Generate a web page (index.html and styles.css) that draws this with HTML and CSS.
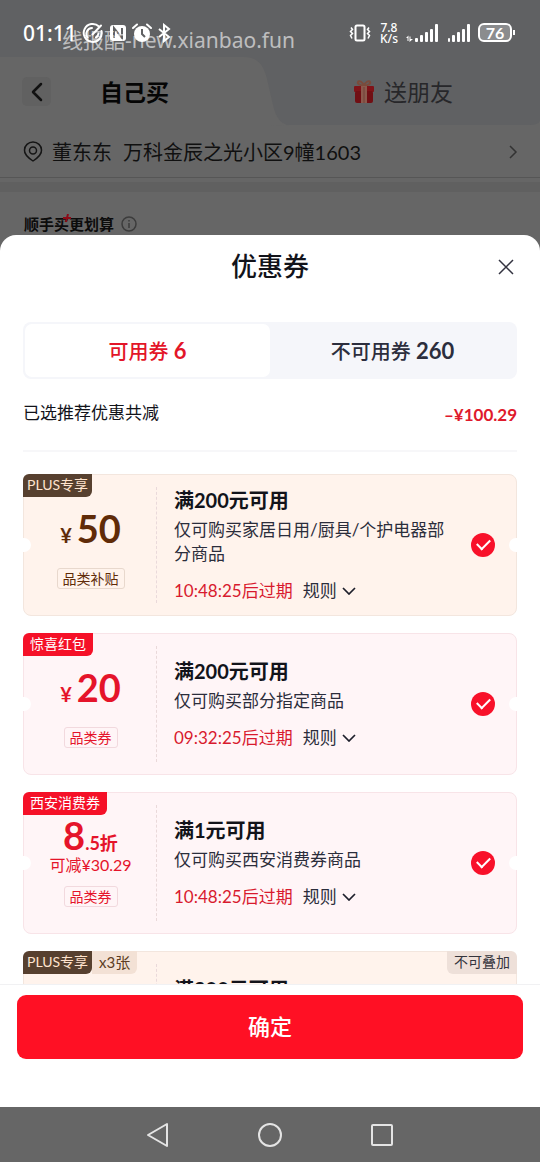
FILE: index.html
```html
<!DOCTYPE html>
<html lang="zh-CN">
<head>
<meta charset="utf-8">
<meta name="viewport" content="width=device-width, initial-scale=1">
<title>优惠券</title>
<link rel="stylesheet" href="styles.css">
</head>
<body>
<div class="statusbar">
  <div class="status-left">
    <span class="clock">01:11</span>
    <svg width="22" height="22" viewBox="0 0 22 22" fill="none" stroke="#fff" stroke-width="2" stroke-linecap="round"><path d="M17 4.500A9 9 0 1 0 19.500 9M5.500 15.500A6 6 0 0 1 10 6M10.500 12.500L19 3.500M14 15.500q2-1 2.500-4"/></svg>
    <svg width="18" height="18" viewBox="0 0 18 18"><rect x="1" y="1" width="16" height="16" rx="3" fill="#fff"/><path d="M5 14V4l8 10V4" fill="none" stroke="#606163" stroke-width="2"/></svg>
    <svg width="20" height="20" viewBox="0 0 20 20"><circle cx="10" cy="11" r="8" fill="#fff"/><path d="M1 5l4-3.500M19 5l-4-3.500" stroke="#fff" stroke-width="2" stroke-linecap="round"/><path d="M10 6v5l3 3" fill="none" stroke="#606163" stroke-width="2"/></svg>
    <svg width="14" height="20" viewBox="0 0 14 20" fill="none" stroke="#fff" stroke-width="2"><path d="M2 6l10 8-5 4V2l5 4-10 8"/></svg>
  </div>
  <div class="status-right">
    <svg width="22" height="18" viewBox="0 0 22 18" fill="none" stroke="#fff" stroke-width="2"><rect x="6.500" y="1.500" width="9" height="15" rx="1.500"/><path d="M2 3.500l1.500 2-2 2 2 2-2 2 1.500 3M20 3.500l-1.500 2 2 2-2 2 2 2-1.500 3" stroke-width="1.500"/></svg>
    <span class="speed"><span>7.8</span><span>K/s</span></span>
    <svg width="32" height="18" viewBox="0 0 32 18" fill="#fff"><path d="M0 14l2.500-2.500V17H1.500v-3zM3.500 12.500h1v2.500H7l-3.500 3z"/><rect x="9" y="14" width="3" height="4" rx="1"/><rect x="14" y="11" width="3" height="7" rx="1"/><rect x="19" y="8" width="3" height="10" rx="1"/><rect x="24" y="5" width="3" height="13" rx="1"/><rect x="29" y="0" width="3" height="18" rx="1"/></svg>
    <svg class="signal" width="22" height="18" viewBox="0 0 22 18" fill="#fff"><rect y="14" width="2" height="4" rx="1"/><rect x="4" y="11" width="3" height="7" rx="1"/><rect x="9" y="8" width="3" height="10" rx="1"/><rect x="14" y="5" width="3" height="13" rx="1"/><rect x="19" y="0" width="3" height="18" rx="1"/></svg>
    <span class="battery">76</span>
  </div>
  <span class="watermark">线报酷-new.xianbao.fun</span>
</div>

<header class="tabs">
  <svg class="tabs-shape" viewBox="0 0 540 69" preserveAspectRatio="none"><path fill="#666" d="M0 0H244C258 0 264 9 267 22L273 48C276 61 281 69 294 69H0Z"/><path fill="#666" d="M270 69H540V64Q538 68 530 68H290Z"/></svg>
  <div class="tab tab-self">
    <button class="back" aria-label="返回"><svg width="16" height="20" viewBox="0 0 16 20" fill="none" stroke="#111" stroke-width="2.500" stroke-linecap="round" stroke-linejoin="round"><path d="M12 2L4 10l8 8"/></svg></button>
    <button class="tab-label active">自己买</button>
  </div>
  <div class="tab tab-gift">
    <button class="tab-label"><svg width="22" height="24" viewBox="0 0 22 24"><path d="M11 6C7 5 4 4 5 2s5 0 6 4c1-4 5-6 6-4s-2 3-6 4" fill="none" stroke="#7b4b3b" stroke-width="2"/><rect x="1" y="6" width="20" height="6" rx="1" fill="#801318"/><rect x="2" y="11" width="18" height="12" rx="2" fill="#710f14"/><path d="M8 6h6v17H8z" fill="#8b5a4d"/><path d="M11 7v16" stroke="#704039" stroke-width="1"/></svg>送朋友</button>
  </div>
</header>

<a class="address" href="#">
  <svg width="20" height="22" viewBox="0 0 20 22" fill="none" stroke="#151515" stroke-width="1.500"><path d="M10 20Q1 14 1.500 9a8.500 8 0 0 1 17 0Q19 14 10 20Z" stroke-linejoin="round"/><circle cx="10" cy="9.500" r="3.500"/></svg>
  <span class="who">董东东</span>
  <span class="where">万科金辰之光小区9幢1603</span>
  <svg width="10" height="14" viewBox="0 0 10 14" fill="none" stroke="#333" stroke-width="1.500"><path d="M2 1l6 6-6 6"/></svg>
</a>
<div class="band"></div>
<div class="addon">
  <span>顺手买<svg class="plus" width="8" height="8" viewBox="0 0 8 8" stroke="#8c0a17" stroke-width="2"><path d="M5 0L3 8M0 4h8"/></svg>更划算</span>
  <svg width="16" height="16" viewBox="0 0 16 16" fill="none" stroke="#3c3c3c" stroke-width="1.500"><circle cx="8" cy="8" r="7"/><path d="M8 7v5M8 4v1.500"/></svg>
</div>

<main class="sheet">
  <div class="sheet-head">
    <h1>优惠券</h1>
    <button class="close" aria-label="关闭"><svg width="16" height="16" viewBox="0 0 16 16" stroke="#333340" stroke-width="1.500"><path d="M1 1l14 14M15 1L1 15"/></svg></button>
  </div>
  <div class="segment">
    <button class="seg active">可用券 <b>6</b></button>
    <button class="seg">不可用券 <b>260</b></button>
  </div>
  <div class="summary"><span>已选推荐优惠共减</span><strong>–¥100.29</strong></div>

  <div class="list">
    <article class="coupon plus-card">
      <span class="badge">PLUS专享</span>
      <div class="value">
        <div class="amount"><p class="price"><small>¥</small>50</p></div>
        <span class="chip">品类补贴</span>
      </div>
      <div class="info">
        <h2>满200元可用</h2>
        <p class="desc">仅可购买家居日用/厨具/个护电器部分商品</p>
        <p class="expiry"><time>10:48:25后过期</time><button class="rule">规则<svg width="14" height="8" viewBox="0 0 14 8" fill="none" stroke="#1d1f2b" stroke-width="1.700"><path d="M1 1l6 6 6-6"/></svg></button></p>
      </div>
      <input class="check" type="checkbox" checked aria-label="选择满200元可用品类补贴">
    </article>

    <article class="coupon">
      <span class="badge">惊喜红包</span>
      <div class="value">
        <div class="amount"><p class="price"><small>¥</small>20</p></div>
        <span class="chip">品类券</span>
      </div>
      <div class="info">
        <h2>满200元可用</h2>
        <p class="desc">仅可购买部分指定商品</p>
        <p class="expiry"><time>09:32:25后过期</time><button class="rule">规则<svg width="14" height="8" viewBox="0 0 14 8" fill="none" stroke="#1d1f2b" stroke-width="1.700"><path d="M1 1l6 6 6-6"/></svg></button></p>
      </div>
      <input class="check" type="checkbox" checked aria-label="选择满200元可用品类券">
    </article>

    <article class="coupon">
      <span class="badge">西安消费券</span>
      <div class="value">
        <div class="amount"><p class="price discount">8<small>.5折</small></p><p class="saving">可减¥30.29</p></div>
        <span class="chip">品类券</span>
      </div>
      <div class="info">
        <h2>满1元可用</h2>
        <p class="desc">仅可购买西安消费券商品</p>
        <p class="expiry"><time>10:48:25后过期</time><button class="rule">规则<svg width="14" height="8" viewBox="0 0 14 8" fill="none" stroke="#1d1f2b" stroke-width="1.700"><path d="M1 1l6 6 6-6"/></svg></button></p>
      </div>
      <input class="check" type="checkbox" checked aria-label="选择满1元可用品类券">
    </article>

    <article class="coupon plus-card brief">
      <span class="badge">PLUS专享</span>
      <span class="count">x3张</span>
      <span class="exclusive">不可叠加</span>
      <div class="value"></div>
      <div class="info"><h2>满200元可用</h2></div>
    </article>
  </div>

  <footer class="sheet-foot"><button class="confirm">确定</button></footer>
</main>

<nav class="navbar">
  <button aria-label="后退"><svg width="24" height="26" viewBox="0 0 24 26" fill="none" stroke="#e4e4e4" stroke-width="2" stroke-linejoin="round"><path d="M21 2v22L2 13Z"/></svg></button>
  <button aria-label="主屏幕"><svg width="26" height="26" viewBox="0 0 26 26" fill="none" stroke="#e4e4e4" stroke-width="2"><circle cx="13" cy="13" r="11"/></svg></button>
  <button aria-label="最近任务"><svg width="24" height="24" viewBox="0 0 24 24" fill="none" stroke="#e4e4e4" stroke-width="2"><rect x="2" y="2" width="20" height="20" rx="1"/></svg></button>
</nav>
</body>
</html>
```
FILE: styles.css
```css
* { box-sizing: border-box; }
body {
  margin: 0;
  height: 100vh;
  display: flex;
  flex-direction: column;
  background: #666;
  color: #12131a;
  font-family: Lato, "Noto Sans CJK SC", sans-serif;
  font-size: 17px;
  line-height: 24px;
}
h1, h2, p { margin: 0; }
svg { display: block; flex: none; }
button { padding: 0; border: 0; background: none; color: inherit; font: inherit; }

.statusbar {
  position: relative;
  flex: none;
  height: 57px;
  padding: 8px 28px 0 23px;
  display: flex;
  justify-content: space-between;
  align-items: center;
  background: #606163;
  color: #fff;
}
.status-left, .status-right { display: flex; align-items: center; }
.status-left { gap: 5px; }
.clock { font-family: "Noto Sans", sans-serif; font-size: 21px; font-weight: 500; }
.speed {
  display: flex;
  flex-direction: column;
  margin: 0 8px 0 9px;
  font-size: 12px;
  line-height: 11px;
  font-family: "Noto Sans", sans-serif;
  font-weight: 500;
  text-align: center;
}
.signal { margin: 0 8px 0 10px; }
.battery {
  position: relative;
  width: 34px;
  border: 2px solid #fff;
  border-radius: 6px;
  background: #8b8c8e;
  font-size: 16px;
  line-height: 15px;
  font-weight: 700;
  text-align: center;
}
.battery::after {
  content: "";
  position: absolute;
  right: -5px;
  top: 5px;
  width: 2px;
  height: 5px;
  background: #fff;
}
.watermark {
  position: absolute;
  left: 62px;
  top: 28px;
  color: rgba(255, 255, 255, 0.6);
  font-family: "Noto Sans", "Noto Sans CJK SC", sans-serif;
  font-size: 21px;
  white-space: nowrap;
}

.tabs {
  position: relative;
  flex: none;
  height: 69px;
  display: flex;
  background: #606163;
}
.tabs-shape { position: absolute; inset: 0; width: 100%; height: 100%; }
.tab { position: relative; flex: 1; display: flex; align-items: center; }
.tab-self { padding-left: 22px; gap: 49px; }
.tab-gift { justify-content: center; }
.back {
  width: 29px;
  height: 29px;
  display: grid;
  place-items: center;
  border-radius: 5px;
  background: #616161;
}
.tab-label {
  display: flex;
  align-items: center;
  gap: 9px;
  color: #27272a;
  font-size: 23px;
}
.tab-label.active { color: #050505; font-weight: 700; }
.tab-gift { padding-right: 10px; }

.address {
  flex: none;
  height: 52px;
  padding: 0 22px 0 23px;
  display: flex;
  align-items: center;
  border-bottom: 1px solid #565656;
  color: #101010;
  font-size: 20px;
  text-decoration: none;
}
.who { margin: 0 11px 0 9px; }
.where { flex: 1; }
.band { flex: none; height: 10px; margin-top: 4px; background: #606060; }
.addon {
  flex: none;
  height: 43px;
  padding: 20px 24px 0;
  display: flex;
  align-items: center;
  gap: 7px;
  color: #0c0c0c;
  font-size: 15px;
  font-weight: 700;
}
.addon span { position: relative; }
.plus { position: absolute; left: 39px; top: 2px; }

.sheet {
  flex: 1;
  min-height: 0;
  display: flex;
  flex-direction: column;
  border-radius: 16px 16px 0 0;
  background: #fff;
}
.sheet-head {
  flex: none;
  position: relative;
  display: grid;
  place-items: center;
  height: 62px;
}
.sheet-head h1 { font-size: 26px; font-weight: 500; line-height: 36px; }
.close { position: absolute; right: 26px; top: 24px; }

.segment {
  flex: none;
  margin: 25px 23px 0;
  padding: 2px;
  display: flex;
  height: 57px;
  border-radius: 8px;
  background: #f5f6fa;
}
.seg { flex: 1; border-radius: 7px; color: #2c2e3d; font-size: 20px; font-weight: 500; }
.seg b { font-size: 22px; }
.seg.active { background: #fff; color: #e31528; }
.summary {
  flex: none;
  margin: 0 23px;
  height: 73px;
  padding-top: 22px;
  display: flex;
  justify-content: space-between;
  align-items: flex-start;
  border-bottom: 2px solid #f7f7f9;
}
.summary strong { color: #df1a2c; font-size: 17px; line-height: 28px; }

.list {
  flex: 1;
  min-height: 0;
  overflow-y: auto;
  scrollbar-width: none;
  padding: 22px 23px 0;
  display: flex;
  flex-direction: column;
  gap: 17px;
}
.coupon {
  position: relative;
  flex: none;
  min-height: 142px;
  display: flex;
  align-items: stretch;
  border: 1px solid #f8e4e8;
  border-radius: 8px;
  background: #fff5f7;
  color: #e5142a;
}
.plus-card { border-color: #f3e6de; background: #fff3ec; color: #602b08; }
.coupon::before, .coupon::after {
  content: "";
  position: absolute;
  top: 63px;
  width: 8px;
  height: 14px;
  background: #fff;
}
.coupon::before { left: -1px; border-radius: 0 7px 7px 0; }
.coupon::after { right: -1px; border-radius: 7px 0 0 7px; }
.badge, .count, .exclusive {
  position: absolute;
  top: -1px;
  height: 23px;
  padding: 0 7px;
  font-size: 14px;
  line-height: 22px;
}
.badge { left: -1px; border-radius: 6px 0 6px 0; background: #f51128; color: #fff; }
.plus-card .badge { padding: 0 4px; background: #57402f; color: #ffe3cd; }
.count { left: 68px; border-radius: 0 0 6px 0; background: #f3e1d5; color: #5e3d24; font-size: 15px; }
.exclusive { right: -1px; border-radius: 0 6px 0 6px; background: #eee0d9; color: #34343c; }

.value {
  flex: none;
  width: 133px;
  padding-top: 23px;
  display: flex;
  flex-direction: column;
  align-items: center;
  gap: 10px;
}
.amount {
  height: 60px;
  display: flex;
  flex-direction: column;
  justify-content: center;
  text-align: center;
}
.price { font-size: 38px; line-height: 38px; font-weight: 700; }
.price small { margin-right: 5px; font-size: 20px; line-height: 20px; }
.price.discount small { margin: 0; font-size: 18px; line-height: 18px; }
.saving { font-size: 16px; line-height: 22px; }
.chip {
  padding: 0 5px;
  border: 1px solid #f2d9de;
  border-radius: 3px;
  font-size: 14px;
  line-height: 19px;
}
.plus-card .chip { border-color: #e8d8cd; }
.info {
  flex: 1;
  position: relative;
  display: flex;
  flex-direction: column;
  justify-content: center;
  padding-left: 17px;
  color: #2b2d3b;
}
.info::before {
  content: "";
  position: absolute;
  left: -1px;
  top: 12px;
  bottom: 12px;
  border-left: 1px dashed #ead9da;
}
.info h2 { color: #12131a; font-size: 20px; line-height: 26px; font-weight: 700; }
.desc { margin-top: 5px; }
.expiry { margin-top: 13px; display: flex; align-items: center; gap: 10px; color: #d81a2e; }
.rule { display: flex; align-items: center; gap: 5px; color: #2b2d3b; }
.brief .info { justify-content: flex-start; padding-top: 24px; }
.check {
  appearance: none;
  flex: none;
  align-self: center;
  width: 24px;
  height: 24px;
  margin: 0 21px 0 23px;
  border-radius: 50%;
  border: 1px solid #ccc;
  display: grid;
  place-items: center;
}
.check:checked { border: 0; background: #f8112a; }
.check:checked::before {
  content: "";
  width: 11px;
  height: 6px;
  margin-bottom: 4px;
  border: solid #fff;
  border-width: 0 0 2px 2px;
  transform: rotate(-45deg);
}

.sheet-foot {
  flex: none;
  padding: 10px 17px 48px;
  border-top: 1px solid #f1f1f3;
}
.confirm {
  width: 100%;
  height: 64px;
  border-radius: 9px;
  background: #ff1024;
  color: #fff;
  font-size: 22px;
  font-weight: 500;
}

.navbar {
  flex: none;
  height: 55px;
  display: flex;
  justify-content: center;
  align-items: center;
  gap: 87px;
}
```
